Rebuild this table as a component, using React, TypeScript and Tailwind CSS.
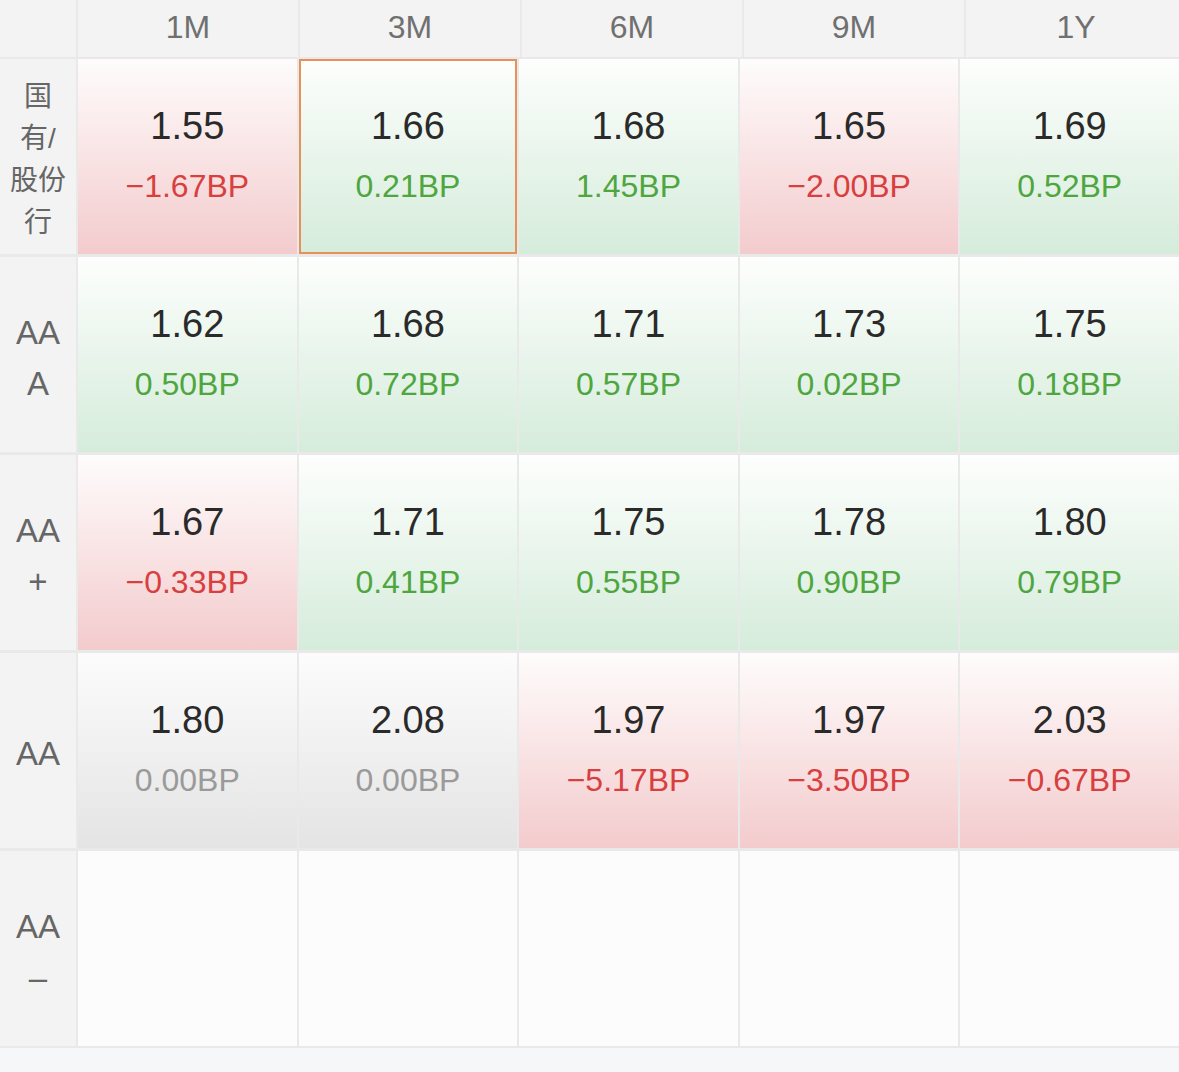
import React from 'react'

type Cell = { value?: string; change?: string; trend?: 'up' | 'down' | 'flat' }

const tenors = ['1M', '3M', '6M', '9M', '1Y']

const rows: { label: string[]; cjk?: boolean; cells: Cell[] }[] = [
    {
        label: ['国', '有/', '股份', '行'],
        cjk: true,
        cells: [
            { value: '1.55', change: '−1.67BP', trend: 'down' },
            { value: '1.66', change: '0.21BP', trend: 'up' },
            { value: '1.68', change: '1.45BP', trend: 'up' },
            { value: '1.65', change: '−2.00BP', trend: 'down' },
            { value: '1.69', change: '0.52BP', trend: 'up' },
        ],
    },
    {
        label: ['AA', 'A'],
        cells: [
            { value: '1.62', change: '0.50BP', trend: 'up' },
            { value: '1.68', change: '0.72BP', trend: 'up' },
            { value: '1.71', change: '0.57BP', trend: 'up' },
            { value: '1.73', change: '0.02BP', trend: 'up' },
            { value: '1.75', change: '0.18BP', trend: 'up' },
        ],
    },
    {
        label: ['AA', '+'],
        cells: [
            { value: '1.67', change: '−0.33BP', trend: 'down' },
            { value: '1.71', change: '0.41BP', trend: 'up' },
            { value: '1.75', change: '0.55BP', trend: 'up' },
            { value: '1.78', change: '0.90BP', trend: 'up' },
            { value: '1.80', change: '0.79BP', trend: 'up' },
        ],
    },
    {
        label: ['AA'],
        cells: [
            { value: '1.80', change: '0.00BP', trend: 'flat' },
            { value: '2.08', change: '0.00BP', trend: 'flat' },
            { value: '1.97', change: '−5.17BP', trend: 'down' },
            { value: '1.97', change: '−3.50BP', trend: 'down' },
            { value: '2.03', change: '−0.67BP', trend: 'down' },
        ],
    },
    {
        label: ['AA', '–'],
        cells: [{}, {}, {}, {}, {}],
    },
]

const bgByTrend = {
    up: 'bg-gradient-to-b from-[#fdfefd] to-[#d5ecdb]',
    down: 'bg-gradient-to-b from-[#fefcfc] to-[#f3cbcd]',
    flat: 'bg-gradient-to-b from-[#fcfcfc] to-[#e4e4e4]',
}

const textByTrend = {
    up: 'text-[#4fa63e]',
    down: 'text-[#d8403f]',
    flat: 'text-[#9a9a9a]',
}

function QuoteCell({ cell, selected }: { cell: Cell; selected: boolean }) {
    const bg = cell.trend ? bgByTrend[cell.trend] : 'bg-[#fcfcfc]'
    return (
        <div className={`relative flex flex-col items-center justify-center ${bg}`}>
            {cell.value && (
                <>
                    <span className="text-[38px] leading-[46px] text-[#2a2a2a] -mt-[4px]">{cell.value}</span>
                    <span className={`text-[32px] leading-[40px] mt-[17px] ${textByTrend[cell.trend!]}`}>{cell.change}</span>
                </>
            )}
            {selected && <div className="absolute inset-0 border-2 border-[#e8905a]" />}
        </div>
    )
}

export default function App() {
    return (
        <div className="w-[1179px] h-[1072px] overflow-hidden bg-[#f6f7f9] font-['Liberation_Sans','Noto_Sans_CJK_SC',sans-serif]">
            <div className="bg-[#e9e9e9] pb-[2px]">
                {/* header */}
                <div className="grid grid-cols-[76px_repeat(5,220px)] gap-x-[2px] h-[57px] overflow-hidden mb-[2px]">
                    <div className="bg-[#f3f3f3]" />
                    {tenors.map((t) => (
                        <div key={t} className="bg-[#f3f3f3] flex items-center justify-center pb-[4px] text-[32px] text-[#707070]">
                            {t}
                        </div>
                    ))}
                </div>

                {/* body */}
                <div className="grid grid-cols-[76px_repeat(5,1fr)] auto-rows-[195px] gap-x-[2px] gap-y-[3px]">
                    {rows.map((row, ri) => (
                        <React.Fragment key={ri}>
                            <div className="bg-[#f3f3f3] flex flex-col items-center justify-center pt-[6px] text-[#666]">
                                {row.label.map((line, li) => (
                                    <span
                                        key={li}
                                        className={row.cjk ? 'text-[28px] leading-[42px]' : 'text-[33px] leading-[51px]'}
                                    >
                                        {line}
                                    </span>
                                ))}
                            </div>
                            {row.cells.map((cell, ci) => (
                                <QuoteCell key={ci} cell={cell} selected={ri === 0 && ci === 1} />
                            ))}
                        </React.Fragment>
                    ))}
                </div>
            </div>
        </div>
    )
}
